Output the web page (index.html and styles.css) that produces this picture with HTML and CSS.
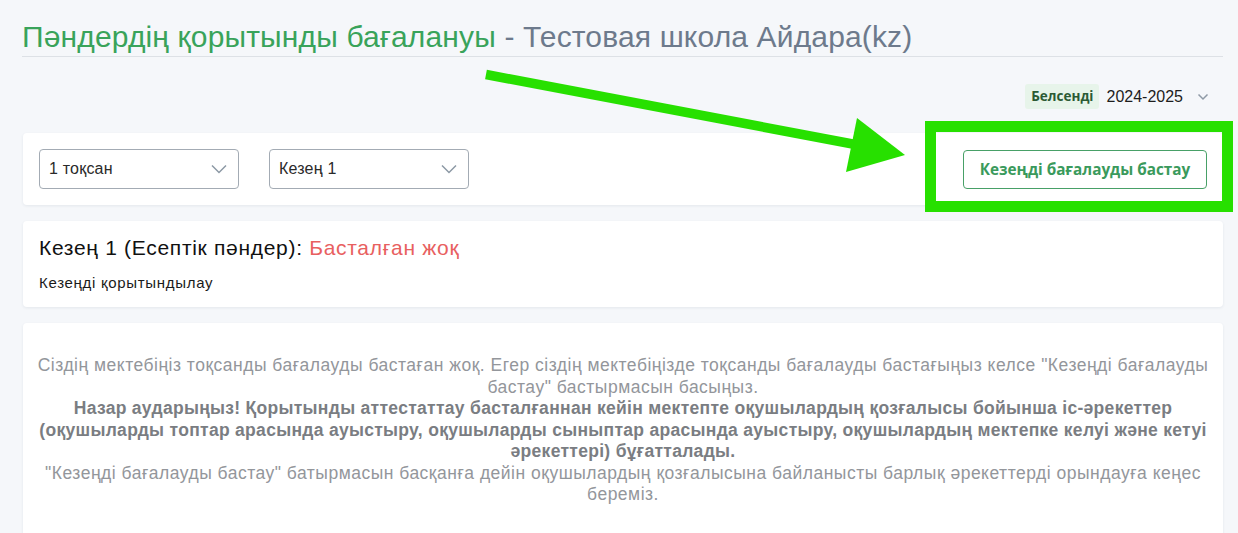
FILE: index.html
```html
<!DOCTYPE html>
<html lang="kk">
<head>
<meta charset="utf-8">
<title>Пәндердің қорытынды бағалануы</title>
<link rel="stylesheet" href="styles.css">
</head>
<body>
<div class="page">
  <h1 class="page-title"><span class="title-main">Пәндердің қорытынды бағалануы</span><span class="title-school"> - Тестовая школа Айдара(kz)</span></h1>

  <div class="year-row">
    <span class="badge">Белсенді</span>
    <span class="year">2024-2025</span>
    <svg class="year-chev" width="12" height="8" viewBox="0 0 12 8"><path d="M1.5 1.5 L6 6 L10.5 1.5" fill="none" stroke="#8f9aa6" stroke-width="1.5"/></svg>
  </div>

  <div class="card toolbar">
    <div class="selects">
      <div class="select"><span>1 тоқсан</span><svg width="16" height="10" viewBox="0 0 16 10"><path d="M1 1.5 L8 8.5 L15 1.5" fill="none" stroke="#8c99a5" stroke-width="1.5"/></svg></div>
      <div class="select"><span>Кезең 1</span><svg width="16" height="10" viewBox="0 0 16 10"><path d="M1 1.5 L8 8.5 L15 1.5" fill="none" stroke="#8c99a5" stroke-width="1.5"/></svg></div>
    </div>
    <button class="btn-start">Кезеңді бағалауды бастау</button>
  </div>

  <div class="card stage">
    <div class="stage-title">Кезең 1 (Есептік пәндер): <span class="status">Басталған жоқ</span></div>
    <div class="stage-sub">Кезеңді қорытындылау</div>
  </div>

  <div class="card notice">
    <p>Сіздің мектебіңіз тоқсанды бағалауды бастаған жоқ. Егер сіздің мектебіңізде тоқсанды бағалауды бастағыңыз келсе "Кезеңді бағалауды бастау" бастырмасын басыңыз.</p>
    <p class="warn">Назар аударыңыз! Қорытынды аттестаттау басталғаннан кейін мектепте оқушылардың қозғалысы бойынша іс-әрекеттер (оқушыларды топтар арасында ауыстыру, оқушыларды сыныптар арасында ауыстыру, оқушылардың мектепке келуі және кетуі әрекеттері) бұғатталады.</p>
    <p>"Кезеңді бағалауды бастау" батырмасын басқанға дейін оқушылардың қозғалысына байланысты барлық әрекеттерді орындауға кеңес береміз.</p>
  </div>
</div>

<svg class="annotation" width="1238" height="533" viewBox="0 0 1238 533">
  <line x1="486" y1="74.5" x2="858" y2="145" stroke="#27e000" stroke-width="9.5"/>
  <polygon points="857,118 846,172 905,155" fill="#27e000"/>
  <rect x="930.5" y="126.5" width="297" height="80" fill="none" stroke="#27e000" stroke-width="11"/>
</svg>
</body>
</html>
```

FILE: styles.css
```css
* { box-sizing: border-box; }

html, body {
  margin: 0;
  padding: 0;
  background: #f5f7fa;
  font-family: "Liberation Sans", Arial, sans-serif;
  color: #222;
  overflow: hidden;
}

body { position: relative; height: 533px; }

.page {
  width: 1200px;
  margin-left: 23px;
}

.page-title {
  margin: 20px 0 0 -1px;
  padding-bottom: 2px;
  font-size: 30px;
  line-height: 34px;
  font-weight: normal;
  letter-spacing: 0.15px;
  border-bottom: 1px solid #dde1e6;
}

.title-main { color: #39a35a; }
.title-school { color: #6d7a8c; }

.year-row {
  display: flex;
  justify-content: flex-end;
  align-items: center;
  margin-top: 27px;
  height: 25px;
  padding-right: 14px;
  margin-bottom: 24px;
}

.badge {
  background: #e7f4ea;
  color: #2b5a34;
  font-family: "Open Sans", "Liberation Sans", sans-serif;
  font-weight: 700;
  font-size: 13.5px;
  height: 25px;
  line-height: 25px;
  padding: 0 6px;
  border-radius: 3px;
}

.year {
  margin-left: 7px;
  font-size: 16px;
  color: #1d1d1d;
}

.year-chev { margin-left: 14px; }

.card {
  background: #fff;
  border-radius: 4px;
  box-shadow: 0 1px 3px rgba(30, 50, 80, 0.08);
}

.toolbar {
  display: flex;
  justify-content: space-between;
  align-items: center;
  padding: 16px;
  height: 72px;
}

.selects {
  display: flex;
  gap: 30px;
}

.select {
  width: 200px;
  height: 40px;
  border: 1px solid #a3abb4;
  border-radius: 4px;
  display: flex;
  align-items: center;
  justify-content: space-between;
  padding: 0 11px 0 9px;
  font-size: 16px;
  letter-spacing: 0.2px;
  color: #2a2a2a;
  background: #fff;
}

.btn-start {
  width: 244px;
  height: 39px;
  border: 1px solid #48a067;
  border-radius: 4px;
  background: #fff;
  color: #3a9a5c;
  font-family: "Open Sans", "Liberation Sans", sans-serif;
  font-weight: 700;
  font-size: 15.3px;
  padding: 0;
}

.stage {
  margin-top: 16px;
  padding: 16px 16px 15px;
  height: 86px;
}

.stage-title {
  font-size: 21px;
  line-height: 22px;
  letter-spacing: 0.7px;
  color: #111;
}

.status { color: #e8605f; }

.stage-sub {
  margin-top: 14px;
  font-size: 15px;
  line-height: 20px;
  letter-spacing: 0.7px;
  color: #1a1a1a;
}

.notice {
  margin-top: 16px;
  padding: 32px 10px 40px;
  text-align: center;
  font-size: 17.5px;
  line-height: 21.5px;
  letter-spacing: 0.5px;
  color: #93969b;
  min-height: 240px;
}

.notice p { margin: 0; }

.notice .warn {
  font-weight: 700;
  color: #7a7d82;
  letter-spacing: 0.3px;
}

.annotation {
  position: absolute;
  left: 0;
  top: 0;
  pointer-events: none;
}
```
